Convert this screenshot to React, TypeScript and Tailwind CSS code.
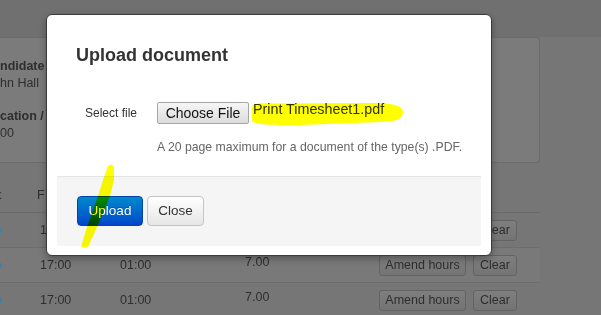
const rows = [
  { start: "17:00", brk: "01:00", hours: "7.00" },
  { start: "17:00", brk: "01:00", hours: "7.00" },
  { start: "17:00", brk: "01:00", hours: "7.00" }
];

function RowButton({ children, width }: { children: React.ReactNode; width: string }) {
  return (
    <span
      className={`inline-flex h-[21px] items-center justify-center rounded-[3px] border border-[#636363] bg-linear-to-b from-[#7e7e7e] to-[#747474] text-[12.5px] text-[#2e2e2e] ${width}`}
    >
      {children}
    </span>
  );
}

export default function App() {
  return (
    <div className="relative h-[315px] w-[601px] overflow-hidden bg-[#767676] font-['Liberation_Sans',Arial,sans-serif] text-[#2e2e2e]">
      {/* page behind the backdrop */}
      <div className="h-[37px] bg-[#707070]" />
      <div className="h-[126px] w-[540px] rounded-r-[4px] border-y border-r border-[#6b6b6b] bg-[#7b7b7b] pt-[20px] text-[12.5px] leading-[17px]">
        <p className="font-bold">ndidate</p>
        <p>hn Hall</p>
        <p className="mt-[16px] font-bold">cation / P</p>
        <p>00</p>
      </div>

      <div className="mt-[16px] w-[540px] text-[12.5px]">
        <div className="grid h-[34px] grid-cols-[37px_1fr] items-center border-b border-[#6a6a6a]">
          <span className="-ml-[2px]">t</span>
          <span>F</span>
        </div>
        {rows.map((row, i) => (
          <div
            key={i}
            className={`grid h-[35px] grid-cols-[40px_80px_125px_134px_1fr] items-center border-b border-[#6d6d6d] ${
              i === 1 ? "bg-[#797979]" : ""
            }`}
          >
            <span className="h-[5px] w-[2px] rounded-r-full bg-[#3f7fa8]" />
            <span>{row.start}</span>
            <span>{row.brk}</span>
            <span className="pb-[5px]">{row.hours}</span>
            <span className="flex gap-[7px]">
              <RowButton width="w-[87px]">Amend hours</RowButton>
              <RowButton width="w-[44px]">Clear</RowButton>
            </span>
          </div>
        ))}
      </div>

      {/* modal */}
      <div className="absolute left-[46px] top-[14px] flex h-[242px] w-[446px] flex-col rounded-[6px] border border-[#3a3a3a] bg-white shadow-[0_3px_7px_rgba(0,0,0,0.3)]">
        <div className="pl-[29px] pt-[30px]">
          <h3 className="text-[18px] font-bold leading-[20px] text-[#333]">Upload document</h3>
        </div>

        <div className="mt-[37px] flex items-start">
          <label className="w-[90px] text-right text-[12px] leading-[22px] text-[#333]">Select file</label>
          <span className="ml-[20px] flex h-[22px] w-[92px] items-center justify-center rounded-[2px] border border-[#a6a6a6] bg-linear-to-b from-[#f6f6f6] to-[#dcdcdc] text-[14px] text-[#111]">
            Choose File
          </span>
          <span className="-mt-[1px] ml-[4px] text-[14.3px] leading-[16px] text-[#333]">Print Timesheet1.pdf</span>
        </div>

        <p className="mt-[14px] pl-[110px] text-[12.25px] leading-[18px] text-[#666]">
          A 20 page maximum for a document of the type(s) .PDF.
        </p>

        <div className="mx-[10px] mt-[20px] flex h-[70px] items-start border-t border-[#e5e5e5] bg-[#f5f5f5] pl-[20px] pt-[19px]">
          <button className="h-[30px] w-[66px] rounded-[4px] border border-[#0044aa] bg-linear-to-b from-[#0088cc] to-[#0044cc] text-[13.5px] text-white [text-shadow:0_-1px_0_rgba(0,0,0,0.25)]">
            Upload
          </button>
          <button className="ml-[4px] h-[30px] w-[57px] rounded-[4px] border border-[#c5c5c5] bg-linear-to-b from-white to-[#e6e6e6] text-[13.5px] text-[#333]">
            Close
          </button>
        </div>
      </div>

      {/* yellow marker scribbles */}
      <svg
        className="pointer-events-none absolute inset-0 mix-blend-multiply"
        width="601"
        height="315"
        viewBox="0 0 601 315"
      >
        <path
          d="M252,107 C252,103 262,103 276,103.5 L368,103 C386,102.5 403,104 403,112 C403,120 394,121.5 382,122 L300,125 C272,125.5 252,125 252,120 Z"
          fill="#ffff00"
        />
        <path
          d="M108,166 Q114,162 114,170 L114,180 L110,196 L97,227 L88,247 L81,247 L87,227 L98,196 L103,180 Z"
          fill="#ffff00"
        />
      </svg>
    </div>
  );
}
